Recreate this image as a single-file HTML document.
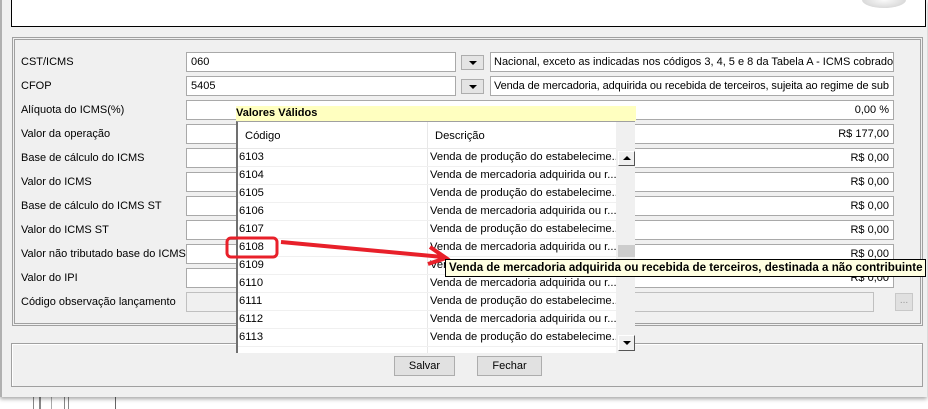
<!DOCTYPE html>
<html><head><meta charset="utf-8"><style>
*{margin:0;padding:0;box-sizing:border-box}
body{width:928px;height:409px;overflow:hidden;background:#fff;font-family:"Liberation Sans",sans-serif;font-size:11px;color:#000;position:relative}
.a{position:absolute}
.win{left:0;top:0;width:927px;height:397px;background:#f0f0f0;border-left:2px solid #b0b0b0;box-shadow:0 2px 4px rgba(0,0,0,.35)}
.inp{position:absolute;background:#fff;border:1px solid #a9a9a9;height:20px;line-height:18px;padding:0 4px;white-space:nowrap;overflow:hidden}
.lbl{position:absolute;left:21px;line-height:14px;white-space:nowrap}
.dd{position:absolute;left:461px;width:23px;height:15px;background:#e4e4e4;border:1px solid #adadad}
.dd:after{content:"";position:absolute;left:7px;top:5px;border-left:4px solid transparent;border-right:4px solid transparent;border-top:4px solid #000}
.r{text-align:right}
.btn{position:absolute;background:#e1e1e1;border:1px solid #adadad;height:20px;line-height:18px;text-align:center}
.tbl{font-size:11.2px}
.row{position:absolute;left:0;width:379px;height:18px;border-bottom:1px solid #f0f0f0;line-height:17px;white-space:nowrap}
.row span{position:absolute}
</style></head><body>
<div class="a" style="left:33px;top:397px;width:1px;height:12px;background:#888"></div>
<div class="a" style="left:39px;top:397px;width:2px;height:12px;background:#888"></div>
<div class="a" style="left:51px;top:397px;width:1px;height:12px;background:#aaa"></div>
<div class="a" style="left:64px;top:397px;width:1px;height:12px;background:#888"></div>
<div class="a" style="left:68px;top:397px;width:1px;height:12px;background:#888"></div>
<div class="a" style="left:115px;top:397px;width:1px;height:12px;background:#666"></div>
<div class="a win"></div>
<div class="a" style="left:11px;top:-2px;width:915px;height:29px;background:#fff;border:1px solid #000"></div>
<div class="a" style="left:862px;top:-8px;width:44px;height:16px;border-radius:50%;background:radial-gradient(#fafafa,#ccc)"></div>
<div class="a" style="left:12px;top:37px;width:911px;height:289px;border:1px solid #a0a0a0"></div>
<div class="a" style="left:14px;top:39px;width:907px;height:285px;border:1px solid #a0a0a0"></div>
<div class="a" style="left:11px;top:343px;width:912px;height:44px;border:1px solid #a0a0a0;box-shadow:inset 1px 1px 0 #fff"></div>

<div class="lbl" style="top:55px">CST/ICMS</div>
<div class="lbl" style="top:79px">CFOP</div>
<div class="lbl" style="top:103px">Alíquota do ICMS(%)</div>
<div class="lbl" style="top:127px">Valor da operação</div>
<div class="lbl" style="top:151px">Base de cálculo do ICMS</div>
<div class="lbl" style="top:175px">Valor do ICMS</div>
<div class="lbl" style="top:199px">Base de cálculo do ICMS ST</div>
<div class="lbl" style="top:223px">Valor do ICMS ST</div>
<div class="lbl" style="top:247px">Valor não tributado base do ICMS</div>
<div class="lbl" style="top:271px">Valor do IPI</div>
<div class="lbl" style="top:295px">Código observação lançamento</div>

<div class="inp" style="left:186px;top:52px;width:270px">060</div>
<div class="dd" style="top:55px"></div>
<div class="inp" style="left:490px;top:52px;width:404px;padding-left:3px">Nacional, exceto as indicadas nos códigos 3, 4, 5 e 8 da Tabela A - ICMS cobrado</div>
<div class="inp" style="left:186px;top:76px;width:270px">5405</div>
<div class="dd" style="top:79px"></div>
<div class="inp" style="left:490px;top:76px;width:404px;padding-left:3px;letter-spacing:-0.1px">Venda de mercadoria, adquirida ou recebida de terceiros, sujeita ao regime de sub</div>
<div class="inp r" style="left:186px;top:100px;width:708px">0,00 %</div>
<div class="inp r" style="left:186px;top:124px;width:708px">R$ 177,00</div>
<div class="inp r" style="left:186px;top:148px;width:708px">R$ 0,00</div>
<div class="inp r" style="left:186px;top:172px;width:708px">R$ 0,00</div>
<div class="inp r" style="left:186px;top:196px;width:708px">R$ 0,00</div>
<div class="inp r" style="left:186px;top:220px;width:708px">R$ 0,00</div>
<div class="inp r" style="left:186px;top:244px;width:708px">R$ 0,00</div>
<div class="inp r" style="left:186px;top:268px;width:708px">R$ 0,00</div>
<div class="inp" style="left:186px;top:292px;width:688px;background:#f0f0f0;border-color:#c0c0c0"></div>
<div class="btn" style="left:895px;top:293px;width:18px;height:18px;line-height:14px;color:#999;font-size:10px;background:#e0e0e0;border-color:#c8c8c8">...</div>

<div class="btn" style="left:394px;top:356px;width:61px">Salvar</div>
<div class="btn" style="left:477px;top:356px;width:65px">Fechar</div>

<div class="a" style="left:236px;top:106px;width:400px;height:15px;background:#ffffc0;font-weight:bold;line-height:15px">Valores Válidos</div>
<div class="a tbl" style="left:236px;top:121px;width:399px;height:232px;background:#fff;border-left:2px solid #707070;border-top:1px solid #a0a0a0;overflow:hidden">
 <div class="a" style="left:0;top:0;width:378px;height:27px;border-bottom:1px solid #e8e8e8;line-height:28px"><span class="a" style="left:7px">Código</span><span class="a" style="left:197px">Descrição</span></div>
 <div class="a" style="left:189px;top:0;width:1px;height:232px;background:#e8e8e8"></div>
 <div class="a" style="left:378px;top:0;width:21px;height:27px;background:#f0f0f0"></div>
 <div class="a" style="top:27px;left:0;width:400px">
  <div class="row" style="top:0"><span style="left:1px">6103</span><span style="left:192px">Venda de produção do estabelecime...</span></div>
  <div class="row" style="top:18px"><span style="left:1px">6104</span><span style="left:192px">Venda de mercadoria adquirida ou r...</span></div>
  <div class="row" style="top:36px"><span style="left:1px">6105</span><span style="left:192px">Venda de produção do estabelecime...</span></div>
  <div class="row" style="top:54px"><span style="left:1px">6106</span><span style="left:192px">Venda de mercadoria adquirida ou r...</span></div>
  <div class="row" style="top:72px"><span style="left:1px">6107</span><span style="left:192px">Venda de produção do estabelecime...</span></div>
  <div class="row" style="top:90px"><span style="left:1px">6108</span><span style="left:192px">Venda de mercadoria adquirida ou r...</span></div>
  <div class="row" style="top:108px"><span style="left:1px">6109</span><span style="left:192px">Venda</span></div>
  <div class="row" style="top:126px"><span style="left:1px">6110</span><span style="left:192px">Venda de mercadoria adquirida ou r...</span></div>
  <div class="row" style="top:144px"><span style="left:1px">6111</span><span style="left:192px">Venda de produção do estabelecime...</span></div>
  <div class="row" style="top:162px"><span style="left:1px">6112</span><span style="left:192px">Venda de mercadoria adquirida ou r...</span></div>
  <div class="row" style="top:180px"><span style="left:1px">6113</span><span style="left:192px">Venda de produção do estabelecime...</span></div>
 </div>
 <div class="a" style="left:378px;top:27px;width:21px;height:205px;background:#f0f0f0"></div>
 <div class="a" style="left:380px;top:29px;width:17px;height:15px;background:#f0f0f0;border:1px solid #fff;border-right-color:#555;border-bottom-color:#555"></div>
 <div class="a" style="left:385px;top:34px;border-left:4px solid transparent;border-right:4px solid transparent;border-bottom:4px solid #000"></div>
 <div class="a" style="left:380px;top:123px;width:17px;height:12px;background:#cdcdcd"></div>
 <div class="a" style="left:380px;top:213px;width:17px;height:16px;background:#f0f0f0;border:1px solid #fff;border-right-color:#555;border-bottom-color:#555"></div>
 <div class="a" style="left:385px;top:219px;border-left:4px solid transparent;border-right:4px solid transparent;border-top:4px solid #000"></div>
</div>

<svg class="a" style="left:0;top:0" width="928" height="409">
 <rect x="227" y="238" width="50" height="19" rx="4" fill="none" stroke="#e8202a" stroke-width="3"/>
 <path d="M281 242 L443 257 M430 247 L446 258 L428 264" fill="none" stroke="#e8202a" stroke-width="4"/>
</svg>
<div class="a" style="left:445px;top:259px;width:481px;height:18px;background:#ffffe1;border:1px solid #000;font-weight:bold;font-size:11.6px;line-height:16px;padding-left:3px;white-space:nowrap;overflow:hidden">Venda de mercadoria adquirida ou recebida de terceiros, destinada a não contribuinte</div>
</body></html>
